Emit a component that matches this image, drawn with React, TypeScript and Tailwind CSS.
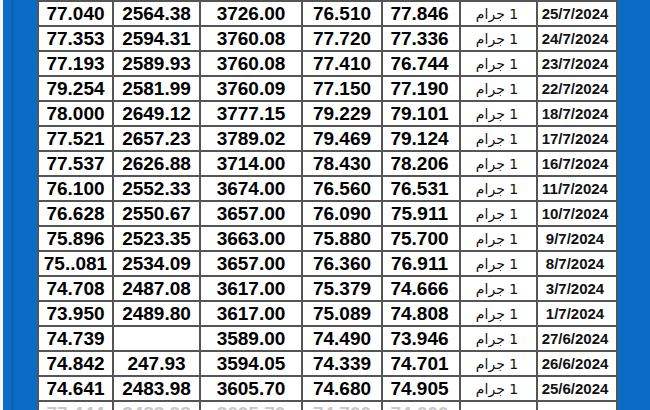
import React from "react";

const rows: string[][] = [
  ["77.040", "2564.38", "3726.00", "76.510", "77.846", "25/7/2024"],
  ["77.353", "2594.31", "3760.08", "77.720", "77.336", "24/7/2024"],
  ["77.193", "2589.93", "3760.08", "77.410", "76.744", "23/7/2024"],
  ["79.254", "2581.99", "3760.09", "77.150", "77.190", "22/7/2024"],
  ["78.000", "2649.12", "3777.15", "79.229", "79.101", "18/7/2024"],
  ["77.521", "2657.23", "3789.02", "79.469", "79.124", "17/7/2024"],
  ["77.537", "2626.88", "3714.00", "78.430", "78.206", "16/7/2024"],
  ["76.100", "2552.33", "3674.00", "76.560", "76.531", "11/7/2024"],
  ["76.628", "2550.67", "3657.00", "76.090", "75.911", "10/7/2024"],
  ["75.896", "2523.35", "3663.00", "75.880", "75.700", "9/7/2024"],
  ["75..081", "2534.09", "3657.00", "76.360", "76.911", "8/7/2024"],
  ["74.708", "2487.08", "3617.00", "75.379", "74.666", "3/7/2024"],
  ["73.950", "2489.80", "3617.00", "75.089", "74.808", "1/7/2024"],
  ["74.739", "", "3589.00", "74.490", "73.946", "27/6/2024"],
  ["74.842", "247.93", "3594.05", "74.339", "74.701", "26/6/2024"],
  ["74.641", "2483.98", "3605.70", "74.680", "74.905", "25/6/2024"],
];

const font = { fontFamily: '"Liberation Sans", Arial, "DejaVu Sans", sans-serif' };

function Row({ r, faded }: { r: string[]; faded?: boolean }) {
  const num = faded
    ? "text-[19px] font-bold text-[#c8c8c8] leading-none"
    : "text-[19px] font-bold text-black leading-none";
  const cell = "flex items-center justify-center border-r-2 border-[#555] h-full";
  return (
    <div className="flex shrink-0 h-[25px] border-b-2 border-[#555] bg-white">
      <div className={`${cell} w-[75px] ${num}`}>{r[0]}</div>
      <div className={`${cell} w-[87px] ${num}`}>{r[1]}</div>
      <div className={`${cell} w-[102px] ${num}`}>{r[2]}</div>
      <div className={`${cell} w-[80px] ${num}`}>{r[3]}</div>
      <div className={`${cell} w-[78px] ${num} pr-[3px]`}>{r[4]}</div>
      <div className={`${cell} w-[77px] pr-[3px] text-[14px] leading-none ${faded ? "text-[#ccc]" : "text-[#111]"}`}>
        <span dir="rtl" style={{ fontFamily: '"DejaVu Sans", "Liberation Sans", sans-serif' }}>
          {faded ? "" : "1 جرام"}
        </span>
      </div>
      <div className={`flex items-center justify-center h-full w-[78px] pr-[4px] text-[15px] font-bold leading-none ${faded ? "text-[#ccc]" : "text-[#111]"}`}>
        {r[5]}
      </div>
    </div>
  );
}

export default function App() {
  return (
    <div className="w-[650px] h-[410px] overflow-hidden flex bg-white" style={font}>
      <div className="w-[3px] h-full bg-[#f4f6f8] shrink-0" />
      <div className="w-[34px] h-full bg-[#0a6cc5] flex shrink-0">
        <div className="w-[8px]" />
        <div className="w-[3px] bg-[#0963b6]" />
      </div>
      <div className="w-[581px] h-full shrink-0 flex flex-col overflow-hidden border-l-2 border-r-2 border-[#555] bg-white">
        <div className="h-[2px] bg-[#555] shrink-0" />
        {rows.map((r, i) => (
          <Row key={i} r={r} />
        ))}
        <Row faded r={["77.444", "2483.98", "3605.70", "74.700", "74.600", ""]} />
      </div>
      <div className="flex-1 h-full bg-[#0a6cc5]" />
    </div>
  );
}
